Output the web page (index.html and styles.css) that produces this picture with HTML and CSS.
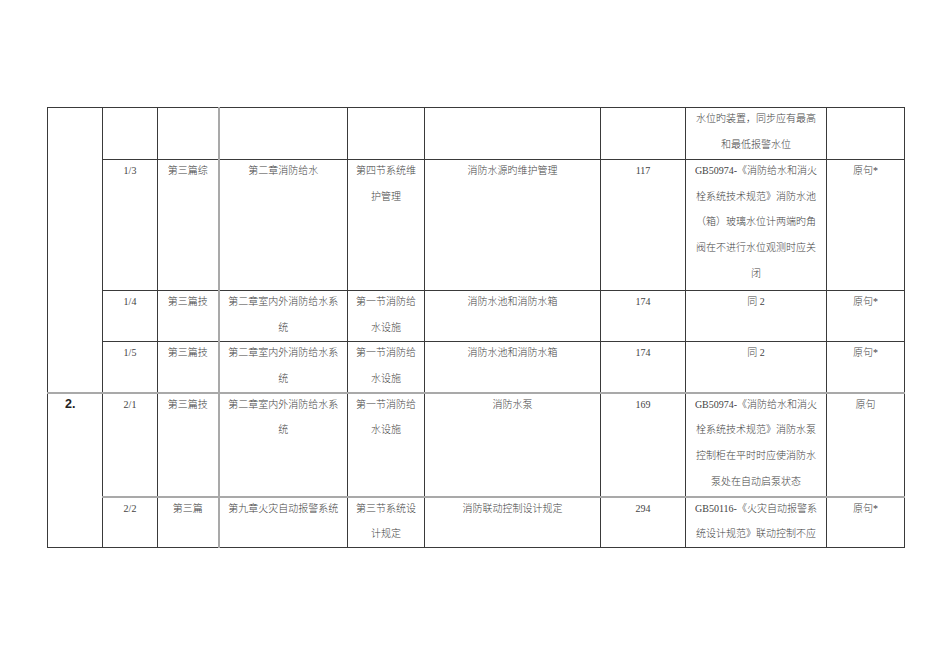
FILE: index.html
```html
<!DOCTYPE html>
<html lang="zh">
<head>
<meta charset="utf-8">
<title>消防规范摘录</title>
<link rel="stylesheet" href="styles.css">
</head>
<body>
<div class="page">
  <table class="grid">
    <colgroup>
      <col class="w-idx"><col class="w-no"><col class="w-part"><col class="w-chap"><col class="w-sec">
      <col class="w-topic"><col class="w-page"><col class="w-src"><col class="w-note">
    </colgroup>
    <tr class="h-top">
      <td class="idx" rowspan="4"></td>
      <td></td>
      <td class="sep"></td>
      <td></td>
      <td></td>
      <td></td>
      <td></td>
      <td><div class="t">水位旳装置，同步应有最高<br>和最低报警水位</div></td>
      <td></td>
    </tr>
    <tr class="h-five">
      <td><div class="t">1/3</div></td>
      <td class="sep"><div class="t">第三篇综</div></td>
      <td><div class="t">第二章消防给水</div></td>
      <td><div class="t">第四节系统维<br>护管理</div></td>
      <td><div class="t">消防水源旳维护管理</div></td>
      <td><div class="t">117</div></td>
      <td><div class="t">GB50974-《消防给水和消火<br>栓系统技术规范》消防水池<br>（箱）玻璃水位计两端旳角<br>阀在不进行水位观测时应关<br>闭</div></td>
      <td><div class="t">原句*</div></td>
    </tr>
    <tr class="h-two">
      <td><div class="t">1/4</div></td>
      <td class="sep"><div class="t">第三篇技</div></td>
      <td><div class="t">第二章室内外消防给水系<br>统</div></td>
      <td><div class="t">第一节消防给<br>水设施</div></td>
      <td><div class="t">消防水池和消防水箱</div></td>
      <td><div class="t">174</div></td>
      <td><div class="t">同 2</div></td>
      <td><div class="t">原句*</div></td>
    </tr>
    <tr class="h-two">
      <td><div class="t">1/5</div></td>
      <td class="sep"><div class="t">第三篇技</div></td>
      <td><div class="t">第二章室内外消防给水系<br>统</div></td>
      <td><div class="t">第一节消防给<br>水设施</div></td>
      <td><div class="t">消防水池和消防水箱</div></td>
      <td><div class="t">174</div></td>
      <td><div class="t">同 2</div></td>
      <td><div class="t">原句*</div></td>
    </tr>
    <tr class="h-four group">
      <td class="idx num-cell" rowspan="2"><div class="t">2.</div></td>
      <td><div class="t">2/1</div></td>
      <td class="sep"><div class="t">第三篇技</div></td>
      <td><div class="t">第二章室内外消防给水系<br>统</div></td>
      <td><div class="t">第一节消防给<br>水设施</div></td>
      <td><div class="t">消防水泵</div></td>
      <td><div class="t">169</div></td>
      <td><div class="t">GB50974-《消防给水和消火<br>栓系统技术规范》消防水泵<br>控制柜在平时时应使消防水<br>泵处在自动启泵状态</div></td>
      <td><div class="t">原句</div></td>
    </tr>
    <tr class="h-two group">
      <td><div class="t">2/2</div></td>
      <td class="sep"><div class="t">第三篇</div></td>
      <td><div class="t">第九章火灾自动报警系统</div></td>
      <td><div class="t">第三节系统设<br>计规定</div></td>
      <td><div class="t">消防联动控制设计规定</div></td>
      <td><div class="t">294</div></td>
      <td><div class="t">GB50116-《火灾自动报警系<br>统设计规范》联动控制不应</div></td>
      <td><div class="t">原句*</div></td>
    </tr>
  </table>
</div>
</body>
</html>
```

FILE: styles.css
```css
html, body {
  margin: 0;
  padding: 0;
  background: #ffffff;
}

.page {
  padding: 107px 0 0 47px;
}

.grid {
  border-collapse: collapse;
  table-layout: fixed;
  width: 857px;
  font-family: "Liberation Serif", "Noto Sans CJK SC", serif;
  font-size: 10px;
  font-weight: 300;
  color: #444444;
}

.w-idx { width: 55px; }
.w-no { width: 55px; }
.w-part { width: 61px; }
.w-chap { width: 129px; }
.w-sec { width: 77px; }
.w-topic { width: 176px; }
.w-page { width: 85px; }
.w-src { width: 141px; }
.w-note { width: 78px; }

.grid td {
  border: 1px solid #3a3a3a;
  padding: 0;
  vertical-align: top;
  text-align: center;
  line-height: 25.7px;
  white-space: nowrap;
  overflow: hidden;
}

.grid .t {
  margin-top: -2px;
}

.grid td.sep {
  border-right: 2px solid #a9a9a9;
}

.grid tr.group > td {
  border-top: 2px solid #a9a9a9;
}

.h-top { height: 52px; }
.h-five { height: 131px; }
.h-two { height: 51px; }
.h-four { height: 104px; }

.grid td.num-cell {
  text-align: left;
  padding-left: 17px;
  font-family: "Liberation Sans", sans-serif;
  font-size: 12.5px;
  font-weight: bold;
  color: #222222;
}
```
